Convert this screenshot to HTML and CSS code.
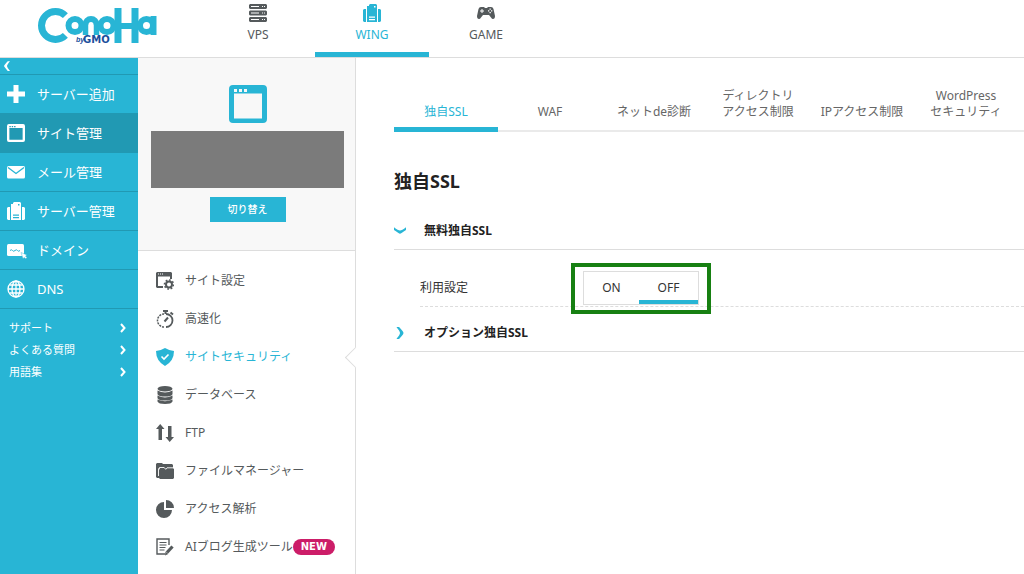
FILE: index.html
```html
<!DOCTYPE html>
<html lang="ja">
<head>
<meta charset="utf-8">
<meta name="viewport" content="width=device-width, initial-scale=1">
<title>独自SSL | ConoHa WING</title>
<link rel="stylesheet" href="styles.css">
</head>
<body>
<svg class="defs" aria-hidden="true">
  <symbol id="i-wing" viewBox="0 0 18 18">
    <path fill="currentColor" d="M0 6l1-1h2v13H1l-1-1zM18 6l-1-1h-2v13h2l1-1zM4 2h2V1l1-1h6l1 1v17H4zM6 12.500v1.200h6v-1.200zM6 15v1.200h6V15zM11 2v1.500h1.500V2z" fill-rule="evenodd"/>
  </symbol>
  <symbol id="i-window" viewBox="0 0 38 38">
    <path fill="currentColor" fill-rule="evenodd" d="M4 0h30a4 4 0 0 1 4 4v30a4 4 0 0 1-4 4H4a4 4 0 0 1-4-4V4a4 4 0 0 1 4-4zM5 8.500v25h28v-25zM5 4v3h3V4zM10 4v3h3V4zM15 4v3h3V4z"/>
  </symbol>
  <symbol id="i-right" viewBox="0 0 6 10">
    <path fill="none" stroke="currentColor" stroke-width="2" d="M1 1l3.500 4L1 9"/>
  </symbol>
  <symbol id="i-curve" viewBox="0 0 8 13">
    <path fill="currentColor" d="M0 0h3q5 5.500 5 6.500T3 13H0q4-4.500 4-6.500T0 0z"/>
  </symbol>
</svg>

<header class="header">
  <a class="logo" href="#" aria-label="ConoHa by GMO">
    <svg viewBox="0 0 119 36" width="119" height="36">
      <g fill="none" stroke="#28b5d5" stroke-width="6">
        <circle cx="17.500" cy="17.500" r="14" stroke-width="7" pathLength="360" stroke-dasharray="270 90" transform="rotate(45 17.500 17.500)"/>
        <circle cx="37" cy="17.500" r="6.500"/>
        <circle cx="53" cy="16.500" r="5.500" pathLength="360" stroke-dasharray="180 180" transform="rotate(180 53 16.500)"/>
        <line x1="47.500" y1="16" x2="47.500" y2="27" stroke-width="5.500"/>
        <line x1="58.500" y1="16" x2="58.500" y2="27" stroke-width="5.500"/>
        <circle cx="69" cy="17.500" r="6.500"/>
        <line x1="80" y1="0" x2="80" y2="35" stroke-width="7"/>
        <line x1="97" y1="0" x2="97" y2="35" stroke-width="7"/>
        <line x1="80" y1="18" x2="97" y2="18" stroke-width="6"/>
        <circle cx="108.500" cy="17.500" r="6.500"/>
        <line x1="115.500" y1="8" x2="115.500" y2="27"/>
      </g>
      <text class="logo-by" x="38" y="34">by</text>
      <text class="logo-gmo" x="45" y="35">GMO</text>
    </svg>
  </a>
  <nav class="services" aria-label="サービス">
    <a class="service" href="#">
      <svg class="icon" viewBox="0 0 18 18"><path fill="currentColor" fill-rule="evenodd" d="M1 0h16l1 1v3l-1 1H1L0 4V1zM1 6.500h16l1 1v3l-1 1H1l-1-1v-3zM1 13h16l1 1v3l-1 1H1l-1-1v-3zM2 2v1h8V2zM2 8.500v1h8v-1zM2 15v1h8v-1zM13 2v1h1V2zM15 2v1h1V2zM13 8.500v1h1v-1zM15 8.500v1h1v-1zM13 15v1h1v-1zM15 15v1h1v-1z"/></svg>
      VPS</a>
    <a class="service is-active" href="#" aria-current="page">
      <svg class="icon"><use href="#i-wing"/></svg>
      WING</a>
    <a class="service" href="#">
      <svg class="icon" viewBox="0 0 18 18"><path fill="currentColor" fill-rule="evenodd" d="M4 3h3l1 1h2l1-1h3q2 0 2.500 2L18 12q0 3-2 3-1 0-2-1.500L12 11H6l-2 2.500Q3 15 2 15q-2 0-2-3L1.500 5Q2 3 4 3zM4.500 5v1.500H3v1h1.500V9h1V7.500H7v-1H5.500V5zM12.500 4.500v1.300h1.300V4.500zM11 6.200v1.300h1.300V6.200zM14 6.200v1.300h1.300V6.200zM12.500 8v1.300h1.300V8z"/></svg>
      GAME</a>
  </nav>
</header>

<div class="layout">
  <aside class="sidebar">
    <button class="collapse" type="button" aria-label="メニューを閉じる">
      <svg viewBox="0 0 8 13" width="6" height="10"><path fill="currentColor" d="M8 0H5Q0 5.500 0 6.500T5 13h3Q4 8.500 4 6.500T8 0z"/></svg>
    </button>
    <nav class="primary" aria-label="メインメニュー">
      <a class="primary-link" href="#"><svg class="icon" viewBox="0 0 18 18"><path fill="currentColor" d="M6.500 0h5v6.500H18v5h-6.500V18h-5v-6.500H0v-5h6.500z"/></svg>サーバー追加</a>
      <a class="primary-link is-active" href="#" aria-current="page"><svg class="icon"><use href="#i-window"/></svg>サイト管理</a>
      <a class="primary-link" href="#"><svg class="icon" viewBox="0 0 18 18"><rect y="3" width="18" height="12.500" rx="1.500" fill="currentColor"/><path d="M1 4.500l8 6 8-6" fill="none" stroke="#28b5d5" stroke-width="1.300"/></svg>メール管理</a>
      <a class="primary-link" href="#"><svg class="icon"><use href="#i-wing"/></svg>サーバー管理</a>
      <a class="primary-link" href="#"><svg class="icon icon-domain" viewBox="0 0 20 18"><rect y="3" width="17" height="12" rx="1.500" fill="currentColor"/><path d="M3 9.500q1.500-1.500 2.500 0t2.500 0 2.500 0 2.500 0" fill="none" stroke="#28b5d5" stroke-width="1"/><path d="M14 11.500l6 2.500-1.500 1 1.500 1.500-1.200 1.200-1.800-1.200-1 1.200z" fill="currentColor" stroke="#28b5d5" stroke-width=".4"/></svg>ドメイン</a>
      <a class="primary-link" href="#"><svg class="icon" viewBox="0 0 18 18"><g fill="none" stroke="currentColor" stroke-width="1.300"><circle cx="9" cy="9" r="8"/><ellipse cx="9" cy="9" rx="4" ry="8"/><path d="M9 1v16M1 9h16M2.500 5h13M2.500 13h13"/></g></svg>DNS</a>
    </nav>
    <nav class="support" aria-label="サポート">
      <a class="support-link" href="#">サポート<svg class="chevron"><use href="#i-right"/></svg></a>
      <a class="support-link" href="#">よくある質問<svg class="chevron"><use href="#i-right"/></svg></a>
      <a class="support-link" href="#">用語集<svg class="chevron"><use href="#i-right"/></svg></a>
    </nav>
  </aside>

  <section class="site" aria-label="サイト">
    <div class="site-card">
      <svg class="site-icon"><use href="#i-window"/></svg>
      <div class="site-name"></div>
      <button class="switch" type="button">切り替え</button>
    </div>
    <nav class="menu" aria-label="サイトメニュー">
      <a class="menu-link" href="#"><svg class="icon" viewBox="0 0 18 18"><path fill="currentColor" fill-rule="evenodd" d="M1 0h14l1 1v6h-2V4.500H2V14h5v2H1l-1-1V1zM2 1.500v1h1v-1zM4 1.500v1h1v-1zM6 1.500v1h1v-1z"/><g fill="none" stroke="currentColor"><circle cx="13" cy="12.500" r="3" stroke-width="2"/><circle cx="13" cy="12.500" r="4.500" stroke-width="1.600" pathLength="16" stroke-dasharray="1 1"/></g></svg>サイト設定</a>
      <a class="menu-link" href="#"><svg class="icon" viewBox="0 0 18 18"><g fill="none" stroke="currentColor"><path stroke-width="1.800" d="M10 4a6.500 6.500 0 0 1 0 13"/><path stroke-width="1.500" stroke-dasharray="2 1" d="M8 17a6.500 6.500 0 0 1 0-13"/><path stroke-width="2" d="M7 1h5M9.500 1v3M14.500 2.500l2.500 2M8.500 11.500l3.500-4"/></g></svg>高速化</a>
      <a class="menu-link is-active" href="#" aria-current="page"><svg class="icon" viewBox="0 0 18 18"><path fill="currentColor" d="M9 0q4 2.500 9 3 0 10-9 15Q0 13 0 3q5-.5 9-3z"/><path d="M5.500 8.500L8 11l4.500-4.500" fill="none" stroke="#fff" stroke-width="1.600"/></svg>サイトセキュリティ</a>
      <a class="menu-link" href="#"><svg class="icon" viewBox="0 0 18 18"><g fill="currentColor"><ellipse cx="9" cy="2.800" rx="7.500" ry="2.800"/><path d="M1.500 4.600q7.500 4 15 0v3.600q-1 2.400-7.500 2.400T1.500 8.200zM1.500 9.600q7.500 4 15 0v2.600q-1 2.300-7.500 2.300t-7.500-2.300zM1.500 13.600q7.500 3.500 15 0v1.900Q15.500 18 9 18t-7.500-2.500z"/></g></svg>データベース</a>
      <a class="menu-link" href="#"><svg class="icon" viewBox="0 0 18 18"><path fill="currentColor" d="M4.200 0l4.300 5H6v11H2.500V5H0zM13.700 18l4.300-5h-2.500V2H12v11H9.500z"/></svg>FTP</a>
      <a class="menu-link" href="#"><svg class="icon" viewBox="0 0 18 18"><path fill="currentColor" d="M0 2l1-1h5l1 1h9l1 1v3H0zM0 6h3v10H1l-1-1zM3 8l1-2h13l1 1v9l-1 1H4l-1-1z"/><path d="M2.500 14V7l1-1.500h4.700L9.700 7.300l1.300-1.500h7" fill="none" stroke="#fff" stroke-width=".9"/></svg>ファイルマネージャー</a>
      <a class="menu-link" href="#"><svg class="icon" viewBox="0 0 18 18"><path fill="currentColor" d="M8 2v8h8a8 8 0 1 1-8-8zM10 0a8 8 0 0 1 8 8h-8z"/></svg>アクセス解析</a>
      <a class="menu-link" href="#"><svg class="icon" viewBox="0 0 18 18"><g fill="none" stroke="currentColor"><path stroke-width="1.400" d="M13 7V1H1v15h8"/><path stroke-width="1.200" d="M3.500 4.500h7M3.500 7h7M3.500 9.500h6M3.500 12h5"/><path stroke-width="3.200" d="M16.500 8.500L11 14.500"/></g><path fill="currentColor" d="M9.500 13.500l2.800 2.500-3.300 1.500z"/></svg>AIブログ生成ツール<span class="badge">NEW</span></a>
    </nav>
  </section>

  <main class="main">
    <nav class="tabs" aria-label="セキュリティ">
      <a class="tab is-active" href="#" aria-current="page">独自SSL</a>
      <a class="tab" href="#">WAF</a>
      <a class="tab" href="#">ネットde診断</a>
      <a class="tab" href="#">ディレクトリ<br>アクセス制限</a>
      <a class="tab" href="#">IPアクセス制限</a>
      <a class="tab" href="#">WordPress<br>セキュリティ</a>
    </nav>
    <h1 class="title">独自SSL</h1>
    <section class="panel">
      <h2 class="panel-head"><button class="panel-toggle" type="button" aria-expanded="true"><svg class="panel-arrow" viewBox="0 0 13 8"><path fill="currentColor" d="M0 0v3q5.500 4 6.500 4T13 3V0Q8.500 3.500 6.500 3.500T0 0z"/></svg>無料独自SSL</button></h2>
      <div class="setting">
        <span class="setting-label" id="usage">利用設定</span>
        <div class="toggle" role="radiogroup" aria-labelledby="usage">
          <label class="option"><input class="radio" type="radio" name="usage">ON</label>
          <label class="option"><input class="radio" type="radio" name="usage" checked>OFF</label>
        </div>
      </div>
    </section>
    <section class="panel">
      <h2 class="panel-head"><button class="panel-toggle" type="button" aria-expanded="false"><svg class="panel-arrow" viewBox="0 0 8 13"><use href="#i-curve"/></svg>オプション独自SSL</button></h2>
    </section>
  </main>
</div>
</body>
</html>
```
FILE: styles.css
```css
:root {
  --blue: #28b5d5;
  --blue-dark: #2199b3;
  --ink: #555a5c;
  --line: #dddddd;
}

* { box-sizing: border-box; }

body {
  display: flex;
  flex-direction: column;
  min-height: 100vh;
  margin: 0;
  background: #fff;
  color: var(--ink);
  font: 12px/16px "Noto Sans", "Noto Sans CJK JP", sans-serif;
}

a { color: inherit; text-decoration: none; }
button { padding: 0; border: 0; background: none; color: inherit; font: inherit; cursor: pointer; }
svg { display: block; flex: none; }

.defs { position: absolute; width: 0; height: 0; }
.icon { width: 18px; height: 18px; }
.icon-domain { width: 20px; margin-right: -2px; }

/* Header */
.header {
  display: flex;
  border-bottom: 1px solid var(--line);
}
.logo { padding: 8px 44px 0 38px; }
.logo-by { fill: #1b4f9c; font: italic bold 7px "Liberation Sans", sans-serif; }
.logo-gmo { fill: #1b4f9c; font: bold 10px "DejaVu Sans", sans-serif; }
.services { display: flex; }
.service {
  display: flex;
  flex-direction: column;
  align-items: center;
  gap: 5px;
  width: 114px;
  padding: 4px 0 9px;
  border-bottom: 5px solid transparent;
}
.service.is-active { border-color: var(--blue); color: var(--blue); }

/* Left sidebar */
.layout { display: flex; flex: 1; }
.sidebar { flex: none; width: 138px; background: var(--blue); color: #fff; }
.collapse {
  display: block;
  width: 100%;
  padding: 3px 4px;
  border-bottom: 1px solid var(--blue-dark);
}
.primary-link {
  display: flex;
  align-items: center;
  gap: 12px;
  height: 39px;
  padding-left: 7px;
  border-bottom: 1px solid var(--blue-dark);
  font-size: 13px;
}
.primary-link.is-active { background: var(--blue-dark); }
.support { padding: 8px 12px 8px 9px; }
.support-link {
  display: flex;
  align-items: center;
  justify-content: space-between;
  font-size: 11px;
  line-height: 22px;
}
.chevron { width: 6px; height: 10px; }

/* Site column */
.site { flex: none; width: 218px; border-right: 1px solid var(--line); }
.site-card {
  display: flex;
  flex-direction: column;
  align-items: center;
  padding: 27px 11px 28px 13px;
  border-bottom: 1px solid var(--line);
  background: #f8f8f8;
}
.site-icon { width: 38px; height: 38px; color: var(--blue); }
.site-name { align-self: stretch; height: 57px; margin: 8px 0 9px; background: #7b7b7b; }
.switch {
  width: 76px;
  background: var(--blue);
  color: #fff;
  font-size: 10px;
  font-weight: 500;
  line-height: 25px;
}
.menu { padding-top: 11px; }
.menu-link {
  display: flex;
  position: relative;
  align-items: center;
  height: 38px;
  padding-left: 18px;
  white-space: nowrap;
}
.menu-link .icon { margin-right: 11px; }
.menu-link.is-active { color: var(--blue); }
.menu-link.is-active::after {
  content: "";
  position: absolute;
  right: -8px;
  width: 14px;
  height: 14px;
  border: solid var(--line);
  border-width: 0 0 1px 1px;
  background: #fff;
  transform: rotate(45deg);
}
.badge {
  padding: 0 8px;
  border-radius: 8px;
  background: #cc1d68;
  color: #fff;
  font: bold 10px/16px "DejaVu Sans", sans-serif;
}

/* Main column */
.main { flex: 1; min-width: 0; padding-left: 38px; }
.tabs {
  display: flex;
  padding-top: 30px;
  box-shadow: inset 0 -2px #eaeaea;
}
.tab {
  display: flex;
  align-items: flex-end;
  justify-content: center;
  flex: 0 1 104px;
  padding-bottom: 7px;
  border-bottom: 5px solid transparent;
  color: #666;
  text-align: center;
  white-space: nowrap;
}
.tab.is-active { border-color: var(--blue); color: var(--blue); }
.title { margin: 37px 0 18px; color: #222; font-size: 18px; line-height: 24px; }
.panel { margin-bottom: 6px; color: #333; }
.panel-head { margin: 0; border-bottom: 1px solid var(--line); font-size: 12px; }
.panel-toggle {
  display: flex;
  align-items: center;
  gap: 18px;
  width: 100%;
  padding: 12px 0 10px;
  color: #222;
}
.panel-arrow { width: 12px; height: 12px; color: var(--blue); }
.setting {
  display: flex;
  align-items: center;
  margin-left: 26px;
  padding: 21px 0 1px;
  border-bottom: 1px dashed var(--line);
}
.setting-label { width: 163px; }
.toggle { display: flex; position: relative; border: 1px solid var(--line); background: #fff; }
.toggle::after {
  content: "";
  position: absolute;
  inset: -9px -13px -10px;
  border: 4px solid #178012;
  pointer-events: none;
}
.option {
  width: 55px;
  padding: 8px 0 4px;
  border-bottom: 4px solid transparent;
  text-align: center;
  cursor: pointer;
}
.option + .option { width: 59px; }
.option:has(:checked) { border-color: var(--blue); }
.radio { position: absolute; opacity: 0; pointer-events: none; }
```
